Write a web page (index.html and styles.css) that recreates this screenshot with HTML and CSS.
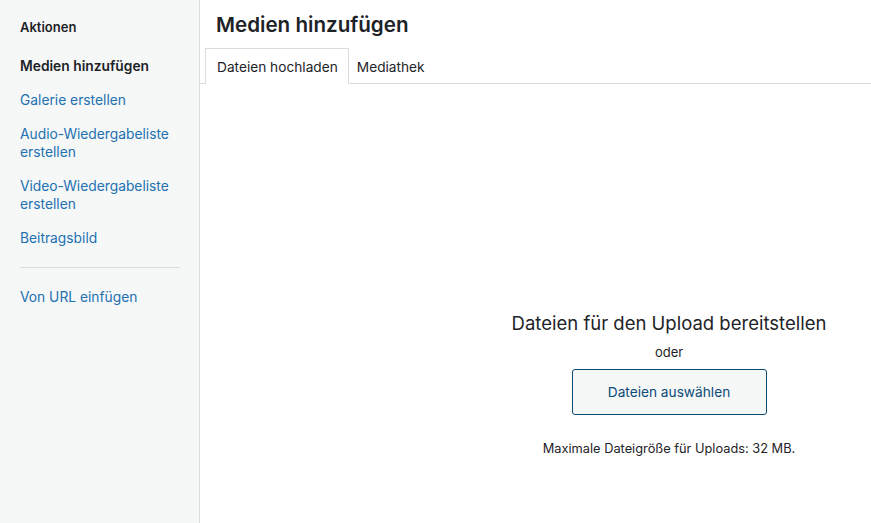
FILE: index.html
```html
<!DOCTYPE html>
<html lang="de">
<head>
<meta charset="utf-8">
<link rel="stylesheet" href="styles.css">
</head>
<body>
<div class="modal">
  <aside class="menu">
    <h2 class="menu-title">Aktionen</h2>
    <nav class="menu-list">
      <span class="menu-item active">Medien hinzufügen</span>
      <a class="menu-item" href="#">Galerie erstellen</a>
      <a class="menu-item" href="#">Audio-Wiedergabeliste erstellen</a>
      <a class="menu-item" href="#">Video-Wiedergabeliste erstellen</a>
      <a class="menu-item" href="#">Beitragsbild</a>
      <div class="separator"></div>
      <a class="menu-item" href="#">Von URL einfügen</a>
    </nav>
  </aside>
  <main class="frame">
    <h1 class="frame-title">Medien hinzufügen</h1>
    <div class="tabs">
      <span class="tab active">Dateien hochladen</span>
      <span class="tab">Mediathek</span>
    </div>
    <div class="content">
      <div class="uploader">
        <h2 class="upload-instructions">Dateien für den Upload bereitstellen</h2>
        <p class="or">oder</p>
        <button class="browser">Dateien auswählen</button>
        <p class="max-size">Maximale Dateigröße für Uploads: 32 MB.</p>
      </div>
    </div>
  </main>
</div>
</body>
</html>
```
FILE: styles.css
```css
* { box-sizing: border-box; }
html, body { margin: 0; padding: 0; height: 100%; }
body {
  font-family: Inter, "Liberation Sans", sans-serif;
  color: #1d2327;
  background: #fff;
  overflow: hidden;
}
.modal {
  display: flex;
  height: 523px;
}
.menu {
  width: 200px;
  flex: none;
  background: #f6f7f7;
  border-right: 1px solid #dcdcde;
  padding: 18px 20px 0 20px;
}
.menu-title {
  margin: 0;
  font-size: 13px;
  font-weight: 600;
  line-height: 18px;
}
.menu-list {
  display: flex;
  flex-direction: column;
  margin-top: 13px;
}
.menu-item {
  display: block;
  font-size: 13.8px;
  line-height: 18px;
  padding: 8px 0;
  color: #2271b1;
  text-decoration: none;
}
.menu-item.active {
  color: #1d2327;
  font-weight: 600;
}
.separator {
  height: 1px;
  background: #dcdcde;
  margin: 12px 0;
  width: 160px;
}
.frame {
  flex: 1;
  display: flex;
  flex-direction: column;
  min-width: 0;
}
.frame-title {
  margin: 0;
  padding: 10px 16px 0 16px;
  font-size: 20.6px;
  font-weight: 600;
  line-height: 30px;
  height: 48px;
}
.tabs {
  display: flex;
  height: 36px;
  padding-left: 5px;
  border-bottom: 1px solid #dcdcde;
}
.tab {
  font-size: 13.7px;
  line-height: 18px;
  padding: 9px 8px 8px 7px;
  border: 1px solid transparent;
  border-bottom: none;
  color: #1d2327;
  margin-bottom: -1px;
}
.tab.active {
  background: #fff;
  border-color: #dcdcde;
  height: 36px;
  padding: 9px 10px 8px 11px;
}
.content {
  flex: 1;
  padding-left: 267px;
}
.uploader {
  text-align: center;
  padding-top: 225px;
}
.upload-instructions {
  margin: 0;
  font-size: 18.5px;
  font-weight: 400;
  line-height: 28px;
}
.or {
  margin: 6px 0 0;
  font-size: 13px;
  line-height: 18px;
}
.browser {
  display: inline-block;
  margin-top: 8px;
  width: 195px;
  height: 46px;
  background: #f6f7f7;
  border: 1px solid #0a4b78;
  border-radius: 3px;
  color: #0a4b78;
  font-family: inherit;
  font-size: 13.7px;
}
.max-size {
  margin: 25px 0 0;
  font-size: 12.8px;
  line-height: 18px;
}
```
